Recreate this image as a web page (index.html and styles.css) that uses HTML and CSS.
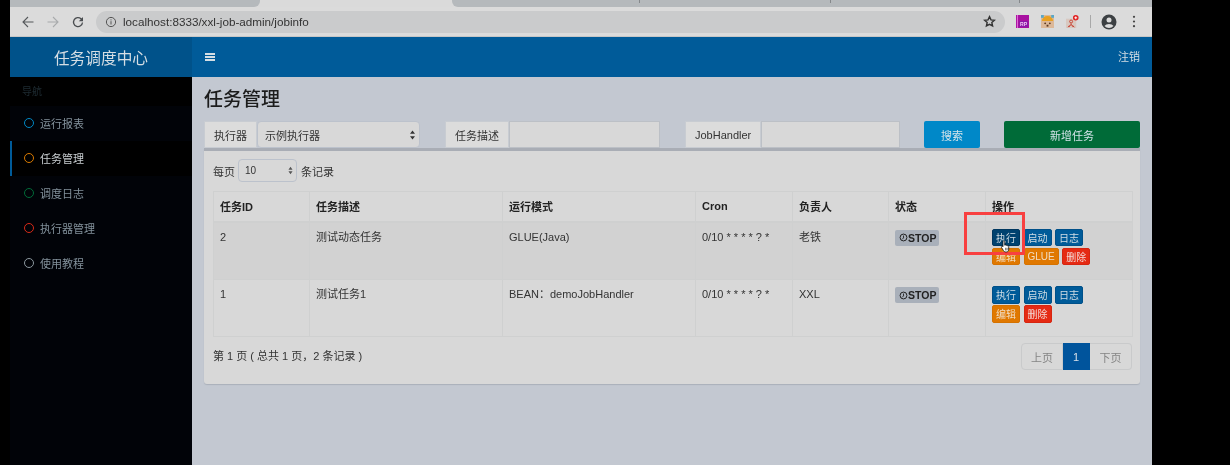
FILE: index.html
```html
<!DOCTYPE html>
<html lang="zh">
<head>
<meta charset="utf-8">
<title>任务调度中心</title>
<link rel="stylesheet" href="styles.css">
</head>
<body>
<div class="screen">
  <div class="tabstrip">
    <div class="tab tab-a"></div>
    <div class="tab tab-b"></div>
    <div class="tab tab-c"><span class="tick t1"></span><span class="tick t2"></span><span class="tick t3"></span></div>
  </div>
  <div class="toolbar">
    <svg class="nav-ic" viewBox="0 0 14 14"><path d="M12.500 7H2M7 2L2 7l5 5" fill="none" stroke="#55585b" stroke-width="1.100"/></svg>
    <svg class="nav-ic" viewBox="0 0 14 14"><path d="M1.500 7H12M7 2l5 5-5 5" fill="none" stroke="#a8aaac" stroke-width="1.100"/></svg>
    <svg class="nav-ic" viewBox="0 0 14 14"><path d="M11.500 7.500A4.500 4.500 0 1 1 10 3.700L11.500 5" fill="none" stroke="#4a4d50" stroke-width="1.300"/><path d="M12 2v4.200H7.800z" fill="#4a4d50"/></svg>
    <div class="omnibox">
      <svg class="info" viewBox="0 0 12 12"><circle cx="6" cy="6" r="4.600" fill="none" stroke="#555" stroke-width="1"/><path d="M6 5.200v3.300M6 3.400v1" stroke="#555" stroke-width="1"/></svg>
      <span class="url">localhost:8333/xxl-job-admin/jobinfo</span>
      <svg class="star" viewBox="0 0 14 14"><path d="M7 1.800l1.600 3.400 3.700.4-2.800 2.500.8 3.700L7 10l-3.300 1.800.8-3.700L1.700 5.600l3.700-.4z" fill="none" stroke="#333" stroke-width="1.500"/></svg>
    </div>
    <div class="extensions">
      <svg class="ext" viewBox="0 0 14 14"><rect width="14" height="14" fill="#a811a0"/><rect x="1" width="1" height="14" fill="#e878e0"/><rect x="3.500" y="6.500" width="9.500" height="6.500" fill="#8a1aa8"/><text x="4.300" y="12.200" class="ext-text">RP</text></svg>
      <svg class="ext" viewBox="0 0 14 14"><rect width="14" height="14" fill="#dcb898"/><path d="M1 6.500a6 5.500 0 0 1 12 0z" fill="#e8a020"/><rect width="3" height="3" fill="#58a8c8"/><rect x="11" width="3" height="3" fill="#58a8c8"/><circle cx="4.500" cy="9" r="1" fill="#5a3820"/><circle cx="9.500" cy="9" r="1" fill="#5a3820"/><path d="M6 10.500h2v2H6z" fill="#5a3820"/></svg>
      <svg class="ext" viewBox="0 0 14 14"><rect y="4" width="11" height="10" fill="#d8c8c0"/><circle cx="5.500" cy="7" r="1.600" fill="none" stroke="#c84030"/><path d="M5.500 9v2M2 13l3.500-2.500L9 13M3.500 13V11.500M7.500 13V11.500" fill="none" stroke="#c84030" stroke-width="1"/><circle cx="10.500" cy="3" r="3" fill="#e02020"/><path d="M9 3h3M10.500 1.500v3" stroke="#fff"/></svg>
      <span class="ext-sep"></span>
      <svg class="avatar" viewBox="0 0 16 16"><circle cx="8" cy="8" r="7.500" fill="#3c4043"/><circle cx="8" cy="6" r="2.500" fill="#dcdcdc"/><path d="M3.500 12a5 3.500 0 0 1 9 0 6 6 0 0 1-9 0z" fill="#dcdcdc"/></svg>
      <svg class="menu-dots" viewBox="0 0 4 14"><circle cx="2" cy="2" r="1.200" fill="#444"/><circle cx="2" cy="7" r="1.200" fill="#444"/><circle cx="2" cy="12" r="1.200" fill="#444"/></svg>
    </div>
  </div>

  <header class="app-header">
    <div class="logo">任务调度中心</div>
    <div class="topbar">
      <div class="burger"><span></span><span></span><span></span></div>
      <a class="logout">注销</a>
    </div>
  </header>

  <div class="app-body">
    <aside class="sidebar">
      <div class="nav-heading">导航</div>
      <ul class="nav">
        <li class="nav-item"><i class="ring ring-blue"></i>运行报表</li>
        <li class="nav-item active"><i class="ring ring-orange"></i>任务管理</li>
        <li class="nav-item"><i class="ring ring-green"></i>调度日志</li>
        <li class="nav-item"><i class="ring ring-red"></i>执行器管理</li>
        <li class="nav-item"><i class="ring ring-grey"></i>使用教程</li>
      </ul>
    </aside>

    <main class="content">
      <h1 class="title">任务管理</h1>
      <div class="filters">
        <div class="group g-exec"><span class="addon">执行器</span><span class="select">示例执行器<svg class="updown" viewBox="0 0 6 11"><path d="M3 0l3 4H0zM3 11L0 7h6z" fill="#333"/></svg></span></div>
        <div class="group g-desc"><span class="addon">任务描述</span><span class="field"></span></div>
        <div class="group g-handler"><span class="addon">JobHandler</span><span class="field"></span></div>
        <button class="search">搜索</button>
        <button class="add">新增任务</button>
      </div>

      <section class="panel">
        <div class="length">每页<span class="size-select">10<svg class="updown small" viewBox="0 0 6 11"><path d="M3 1l2.500 3.500h-5zM3 10L.5 6.500h5z" fill="#555"/></svg></span>条记录</div>
        <table class="jobs">
          <colgroup>
            <col class="c1"><col class="c2"><col class="c3"><col class="c4"><col class="c5"><col class="c6"><col class="c7">
          </colgroup>
          <thead>
            <tr><th>任务ID</th><th>任务描述</th><th>运行模式</th><th>Cron</th><th>负责人</th><th>状态</th><th>操作</th></tr>
          </thead>
          <tbody>
            <tr class="hover">
              <td>2</td><td>测试动态任务</td><td>GLUE(Java)</td><td>0/10 * * * * ? *</td><td>老铁</td>
              <td><span class="badge"><svg class="clock" viewBox="0 0 10 10"><circle cx="5" cy="5" r="3.800" fill="none" stroke="#222" stroke-width="1.100"/><path d="M5 2.800V5.500L3.500 7" fill="none" stroke="#222"/></svg>STOP</span></td>
              <td class="ops">
                <div class="ops-row"><a class="btn blue pressed">执行</a><a class="btn blue">启动</a><a class="btn blue">日志</a></div>
                <div class="ops-row"><a class="btn orange">编辑</a><a class="btn orange">GLUE</a><a class="btn red">删除</a></div>
              </td>
            </tr>
            <tr>
              <td>1</td><td>测试任务1</td><td>BEAN：demoJobHandler</td><td>0/10 * * * * ? *</td><td>XXL</td>
              <td><span class="badge"><svg class="clock" viewBox="0 0 10 10"><circle cx="5" cy="5" r="3.800" fill="none" stroke="#222" stroke-width="1.100"/><path d="M5 2.800V5.500L3.500 7" fill="none" stroke="#222"/></svg>STOP</span></td>
              <td class="ops">
                <div class="ops-row"><a class="btn blue">执行</a><a class="btn blue">启动</a><a class="btn blue">日志</a></div>
                <div class="ops-row"><a class="btn orange">编辑</a><a class="btn red">删除</a></div>
              </td>
            </tr>
          </tbody>
        </table>
        <div class="foot">
          <div class="info-text">第 1 页 ( 总共 1 页，2 条记录 )</div>
          <div class="pager"><a class="pg">上页</a><a class="pg current">1</a><a class="pg">下页</a></div>
        </div>
      </section>
    </main>
  </div>

  <div class="highlight"></div>
  <svg class="cursor" viewBox="0 0 12 15"><path d="M3.500 1.200c.8-.6 1.600 0 1.600.8v4l.6-.2c.6-.2 1.100 0 1.300.4.600-.2 1.100 0 1.300.4.600-.2 1.300.2 1.400.9v3.500c0 1.500-1 2.800-2.500 2.800H6c-1 0-1.800-.6-2.300-1.500L1.300 8.500c-.3-.6 0-1.100.5-1.200.5-.1 1 .2 1.300.6V2c0-.3.100-.6.400-.8z" fill="#fff" stroke="#111" stroke-width=".9"/><path d="M6 9v3M7.500 9v3M9 9v3" stroke="#111" stroke-width=".6"/></svg>
</div>
</body>
</html>
```
FILE: styles.css
```css
* { box-sizing: border-box; }
html, body { margin: 0; padding: 0; background: #000; }
body {
  font-family: "Liberation Sans", "Noto Sans CJK SC", sans-serif;
  font-size: 11px;
  color: #333;
  width: 1230px;
  height: 465px;
  overflow: hidden;
}
.screen {
  position: relative;
  width: 1142px;
  height: 465px;
  margin-left: 10px;
  display: flex;
  flex-direction: column;
  overflow: hidden;
  filter: blur(.3px);
}

.tabstrip { display: flex; height: 7px; background: #dadada; flex: none; }
.tab { height: 7px; }
.tab-a { width: 250px; background: #b5b9bc; border-bottom-right-radius: 6px; }
.tab-b { width: 192px; background: #dadada; }
.tab-c { flex: 1; display: flex; background: #b5b9bc; border-bottom-left-radius: 6px; }
.tick { height: 3px; border-right: 1px solid #85888b; }
.t1 { width: 188px; }
.t2 { width: 191px; }
.t3 { width: 189px; }

.toolbar {
  height: 30px;
  flex: none;
  display: flex;
  align-items: center;
  background: #dbdbdb;
  border-bottom: 1px solid #c6c6c6;
  padding-left: 11px;
}
.nav-ic { width: 14px; height: 14px; margin-right: 11px; flex: none; }
.omnibox {
  width: 909px;
  height: 22px;
  border-radius: 11px;
  background: #cacbcc;
  display: flex;
  align-items: center;
  padding: 0 8px 0 9px;
  flex: none;
}
.info { width: 12px; height: 12px; margin-right: 6px; flex: none; }
.url { font-size: 11.700px; color: #333; flex: 1; }
.star { width: 13px; height: 13px; margin-right: 1px; flex: none; }
.extensions { display: flex; align-items: center; flex: 1; padding-left: 11px; }
.ext { width: 13px; height: 13px; margin-right: 12px; flex: none; }
.ext-text { font: bold 5.500px "Liberation Sans", sans-serif; fill: #f4c8f4; }
.ext-sep { width: 1px; height: 13px; background: #a8a8a8; margin-left: -1px; margin-right: 10px; }
.avatar { width: 16px; height: 16px; margin-right: 15px; flex: none; }
.menu-dots { width: 4px; height: 13px; flex: none; }

.app-header { display: flex; height: 40px; flex: none; }
.logo {
  width: 182px;
  background: #00528a;
  color: #d5dee4;
  font-size: 15.700px;
  display: flex;
  align-items: center;
  justify-content: center;
}
.topbar {
  flex: 1;
  background: #005b99;
  display: flex;
  align-items: center;
  justify-content: space-between;
  padding: 0 12px 2px;
}
.burger { display: flex; flex-direction: column; gap: 1.500px; margin: 2px 0 0 1px; }
.burger span { display: block; width: 10px; height: 1.500px; background: #d5dee4; }
.logout { color: #d5dee4; font-size: 11px; }

.app-body { flex: 1; display: flex; min-height: 0; }
.sidebar { width: 182px; background: #010308; flex: none; }
.nav-heading {
  height: 29px;
  background: #000;
  color: #1e2c33;
  font-size: 10px;
  padding: 6px 0 0 12px;
}
.nav { list-style: none; margin: 0; padding: 0; }
.nav-item {
  height: 35px;
  display: flex;
  align-items: center;
  padding: 0 0 1px 14px;
  color: #83929c;
  font-size: 11px;
}
.nav-item.active {
  background: #000;
  color: #c8cdd0;
  box-shadow: inset 2px 0 0 #005b99;
}
.ring {
  width: 10px;
  height: 10px;
  border-radius: 50%;
  border: 1.700px solid;
  margin-right: 6px;
  flex: none;
}
.ring-blue { border-color: #0088c4; }
.ring-orange { border-color: #d87a00; }
.ring-green { border-color: #006b38; }
.ring-red { border-color: #d62a18; }
.ring-grey { border-color: #8b979e; }

.content { flex: 1; background: #c3c8d1; padding: 12px 12px 0 12px; min-width: 0; }
.title {
  margin: 0;
  font-size: 19px;
  font-weight: 500;
  line-height: 22px;
  color: #1c1c1c;
}
.filters { display: flex; align-items: stretch; height: 27px; margin-top: 10px; }
.group { display: flex; height: 27px; }
.g-exec { width: 216px; }
.g-desc { width: 215px; margin-left: 25px; }
.g-handler { width: 215px; margin-left: 25px; }
.addon {
  flex: none;
  display: flex;
  align-items: center;
  padding: 0 9px;
  background: #dcdcdc;
  border: 1px solid #c8ccd2;
  color: #333;
  font-size: 11px;
}
.select {
  flex: 1;
  display: flex;
  align-items: center;
  justify-content: space-between;
  padding: 0 4px 0 7px;
  background: #d8d8d8;
  border: 1px solid #bcc2cc;
  border-radius: 4px;
  font-size: 11px;
}
.updown { width: 5px; height: 10px; flex: none; }
.field {
  flex: 1;
  background: #d8d8d8;
  border: 1px solid #bcc0c6;
}
.search, .add {
  border: 0;
  border-radius: 2px;
  color: #d4e4ea;
  font: inherit;
  font-size: 11px;
  padding: 0;
}
.search { width: 56px; margin-left: 24px; background: #0088c8; }
.add { width: 136px; margin-left: 24px; background: #006b38; }

.panel {
  width: 936px;
  height: 236px;
  background: #d8d8d8;
  border-top: 3px solid #a9adb5;
  border-radius: 0 0 3px 3px;
  box-shadow: 0 1px 1px #aab0ba;
  padding: 8px 9px 0 9px;
}
.length { display: flex; align-items: center; height: 23px; color: #333; font-size: 11px; }
.size-select {
  width: 59px;
  height: 23px;
  margin: 0 4px 0 3px;
  border: 1px solid #bcc2cc;
  border-radius: 4px;
  display: flex;
  align-items: center;
  justify-content: space-between;
  padding: 0 3px 0 6px;
  font-size: 10px;
}
.small { width: 5px; height: 9px; }
.jobs {
  width: 919px;
  margin-top: 9px;
  border-collapse: collapse;
  table-layout: fixed;
  font-size: 11px;
}
.c1 { width: 96px; }
.c2, .c3 { width: 193px; }
.c4 { width: 97px; }
.c5 { width: 96px; }
.c6 { width: 97px; }
.c7 { width: 147px; }
.jobs th, .jobs td { border: 1px solid #cfd0d0; text-align: left; vertical-align: top; padding: 0 6px; }
.jobs th { height: 30px; vertical-align: middle; border-bottom-width: 2px; color: #222; font-weight: 700; }
.jobs td { height: 57px; padding-top: 6px; line-height: 16px; color: #333; }
.hover td { background: #d2d2d2; height: 58px; }
.badge {
  display: inline-flex;
  align-items: center;
  height: 16px;
  margin-top: 1px;
  padding: 0 1px 0 4px;
  width: 44px;
  background: #a9b0ba;
  border-radius: 2px;
  color: #222;
  font-size: 10.500px;
  font-weight: 700;
}
.clock { width: 9px; height: 9px; flex: none; }
.jobs td.ops { padding: 6px 6px 0 6px; line-height: normal; }
.ops-row { display: flex; gap: 3.500px; height: 19px; }
.btn {
  height: 17.500px;
  min-width: 28px;
  padding: 0 3px;
  display: flex;
  align-items: center;
  justify-content: center;
  font-size: 10px;
  border-radius: 2px;
  border: 1px solid;
  color: #d0dde4;
}
.blue { background: #005b99; border-color: #005089; }
.pressed { background: #00426f; border-color: #00375f; }
.orange { background: #e07800; border-color: #d57200; color: #f0dcc0; }
.red { background: #e52a13; border-color: #d62510; color: #f3d8d4; }
.foot { display: flex; justify-content: space-between; align-items: flex-start; margin-top: 6px; width: 919px; }
.info-text { padding-top: 5px; line-height: 16px; color: #333; }
.pager { display: flex; height: 27px; }
.pg {
  display: flex;
  align-items: center;
  justify-content: center;
  width: 42px;
  border: 1px solid #c9cacb;
  border-left: 0;
  color: #858585;
}
.pg:first-child { border-left: 1px solid #c9cacb; border-radius: 4px 0 0 4px; }
.pg:last-child { border-radius: 0 4px 4px 0; }
.pg.current { width: 27px; background: #00549c; border-color: #00549c; color: #d8e0e8; }

.highlight {
  position: absolute;
  left: 954px;
  top: 212px;
  width: 61px;
  height: 43px;
  border: 3px solid #f84040;
}
.cursor { position: absolute; left: 990px; top: 240px; width: 11px; height: 13px; }
```
